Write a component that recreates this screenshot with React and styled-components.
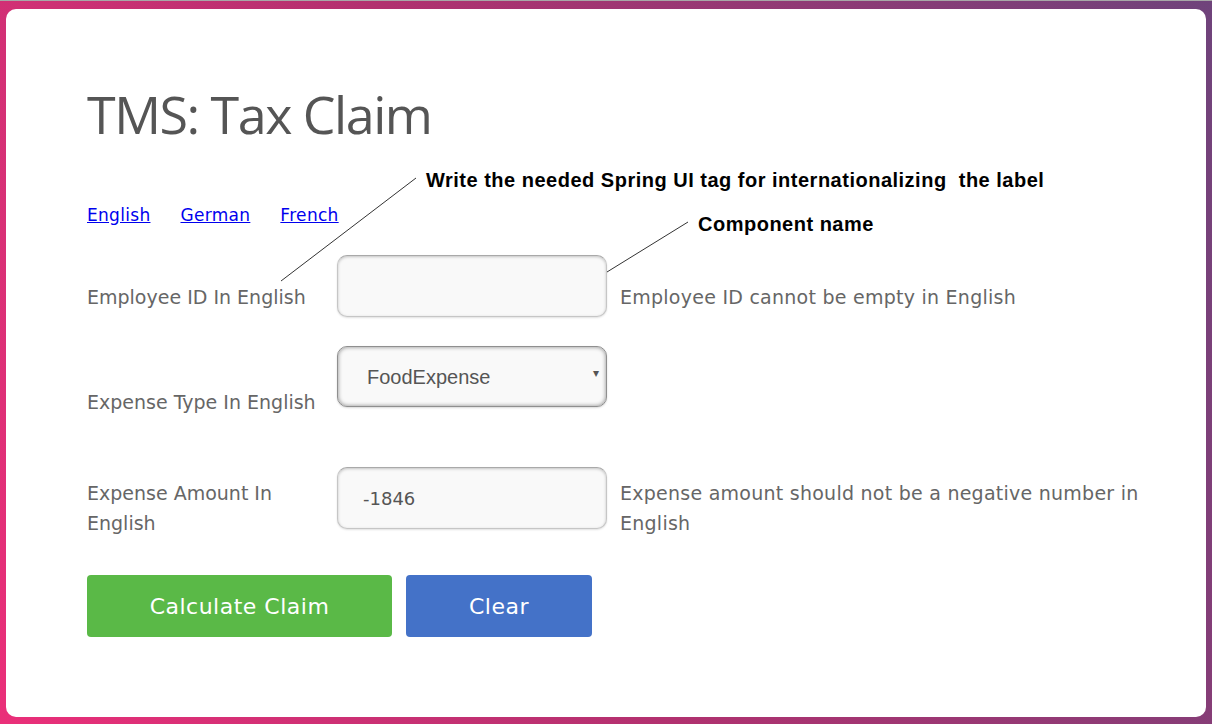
import React from 'react'
import styled, { createGlobalStyle } from 'styled-components'

const GlobalStyle = createGlobalStyle`
  html, body {
    margin: 0;
    padding: 0;
  }
  body {
    font-family: 'DejaVu Sans', 'Open Sans', sans-serif;
    background: linear-gradient(68deg, #ea2f79 0%, #b1316f 45%, #6f437b 100%);
    min-height: 100vh;
  }
  * {
    box-sizing: border-box;
  }
`

const Page = styled.div`
  border-top: 1px solid #a7a7a7;
  padding: 8px 6px 7px;
  height: 724px;
`

const Card = styled.div`
  position: relative;
  height: 708px;
  background: #fff;
  border-radius: 10px;
  padding: 79px 50px 0 81px;
`

const Title = styled.h1`
  margin: 0;
  font-family: 'Open Sans', sans-serif;
  font-size: 52px;
  line-height: 52px;
  font-weight: 400;
  color: #555;
  letter-spacing: -1.5px;
`

const LangBar = styled.div`
  display: flex;
  gap: 30px;
  margin-top: 65px;
  line-height: 20px;
  a {
    color: #0000ee;
    font-size: 17px;
    letter-spacing: 0.3px;
    text-decoration: underline;
  }
`

const Form = styled.form`
  display: flex;
  flex-direction: column;
`

const Row = styled.div`
  display: grid;
  grid-template-columns: 250px 270px 1fr;
  align-items: start;
  margin-top: ${p => p.gap}px;
`

const Label = styled.label`
  font-size: 19px;
  line-height: 30px;
  color: #666;
  padding-top: ${p => p.offset}px;
  padding-right: 20px;
`

const Message = styled.div`
  font-size: 19px;
  line-height: 30px;
  letter-spacing: 0.25px;
  color: #666;
  padding-left: 13px;
  padding-top: ${p => p.offset}px;
`

const TextInput = styled.input`
  width: 270px;
  height: 62px;
  border: 1px solid #c6c6c6;
  border-top-color: #a9a9a9;
  border-radius: 10px;
  background: #f9f9f9;
  box-shadow: inset 0 1px 3px rgba(0, 0, 0, 0.22), 0 1px 2px rgba(0, 0, 0, 0.12);
  padding: 0 25px;
  font-family: inherit;
  font-size: 18px;
  color: #555;
  outline: none;
`

const SelectWrap = styled.div`
  position: relative;
  width: 270px;
  height: 61px;
  &::after {
    content: '▾';
    position: absolute;
    right: 8px;
    top: 20px;
    font-size: 12px;
    color: #555;
    pointer-events: none;
  }
`

const Select = styled.select`
  appearance: none;
  width: 100%;
  height: 100%;
  border: 1px solid #8f8f8f;
  border-radius: 10px;
  background: #f9f9f9;
  box-shadow: inset 0 0 4px rgba(0, 0, 0, 0.45), 0 1px 2px rgba(0, 0, 0, 0.15);
  padding: 0 29px;
  font-family: 'Liberation Sans', Arial, sans-serif;
  font-size: 20px;
  color: #555;
  outline: none;
`

const Actions = styled.div`
  display: flex;
  gap: 14px;
  margin-top: 37px;
`

const Button = styled.button`
  width: ${p => p.width}px;
  height: 62px;
  border: none;
  border-radius: 4px;
  background: ${p => p.color};
  color: #fff;
  font-family: inherit;
  font-size: 22px;
  letter-spacing: 0.5px;
  cursor: pointer;
`

const Callout = styled.div`
  position: absolute;
  left: ${p => p.x}px;
  top: ${p => p.y}px;
  font-family: 'Liberation Sans', Arial, sans-serif;
  font-weight: 700;
  font-size: 20px;
  letter-spacing: 0.5px;
  line-height: 20px;
  color: #000;
  white-space: pre;
`

const Leaders = styled.svg`
  position: absolute;
  left: 0;
  top: 0;
  pointer-events: none;
`

const App = () => {
  return (
    <>
      <GlobalStyle />
      <Page>
        <Card>
          <Title>TMS: Tax Claim</Title>
          <LangBar>
            <a href='#en'>English</a>
            <a href='#de'>German</a>
            <a href='#fr'>French</a>
          </LangBar>
          <Form onSubmit={e => e.preventDefault()}>
            <Row gap={30}>
              <Label offset={27}>Employee ID In English</Label>
              <TextInput type='text' defaultValue='' />
              <Message offset={27}>Employee ID cannot be empty in English</Message>
            </Row>
            <Row gap={29}>
              <Label offset={41}>Expense Type In English</Label>
              <SelectWrap>
                <Select defaultValue='FoodExpense'>
                  <option>FoodExpense</option>
                  <option>TravelExpense</option>
                  <option>MedicalExpense</option>
                </Select>
              </SelectWrap>
              <div />
            </Row>
            <Row gap={50}>
              <Label offset={11}>Expense Amount In English</Label>
              <TextInput type='text' defaultValue='-1846' />
              <Message offset={11}>Expense amount should not be a negative number in English</Message>
            </Row>
            <Actions>
              <Button type='submit' width={305} color='#5ab947'>Calculate Claim</Button>
              <Button type='reset' width={186} color='#4472c8'>Clear</Button>
            </Actions>
          </Form>

          <Callout x={420} y={161}>Write the needed Spring UI tag for internationalizing  the label</Callout>
          <Callout x={692} y={205}>Component name</Callout>
          <Leaders width='1200' height='708'>
            <line x1='275' y1='272' x2='410' y2='169' stroke='#333' strokeWidth='1' />
            <line x1='601' y1='263' x2='682' y2='213' stroke='#333' strokeWidth='1' />
          </Leaders>
        </Card>
      </Page>
    </>
  )
}

export default App
